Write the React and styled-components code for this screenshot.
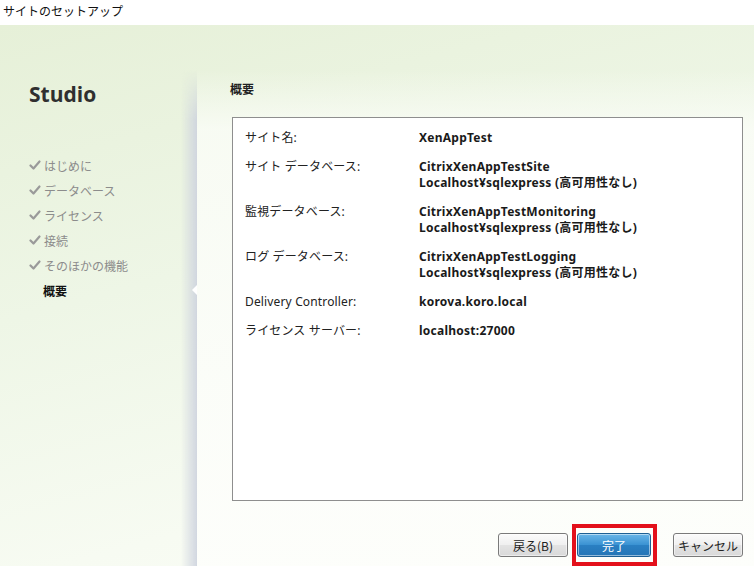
import styled, { createGlobalStyle } from "styled-components";

const Global = createGlobalStyle`
  html, body {
    margin: 0;
    padding: 0;
    width: 754px;
    height: 566px;
    overflow: hidden;
    font-family: "Noto Sans", "Noto Sans CJK JP", sans-serif;
    font-size: 12px;
    color: #1e1e1e;
  }
`;

const Window = styled.div`
  display: flex;
  flex-direction: column;
  width: 754px;
  height: 566px;
  background: #fff;
`;

const TitleBar = styled.div`
  height: 25px;
  padding-left: 3px;
  display: flex;
  align-items: flex-start;
  padding-top: 2px;
  box-sizing: border-box;
  font-family: "Noto Sans CJK JP", sans-serif;
  font-size: 12px;
  color: #111;
  background: #fff;
`;

const Body = styled.div`
  flex: 1;
  display: flex;
  background: linear-gradient(165deg, #e6f0d8 0%, #eef6e6 40%, #f7fbf2 75%, #fbfdf8 100%);
`;

const Sidebar = styled.div`
  width: 197px;
  flex-shrink: 0;
  padding: 55px 0 0 29px;
  box-sizing: border-box;
`;

const Brand = styled.h1`
  margin: 0 0 48px;
  font-family: "Open Sans", "Noto Sans", sans-serif;
  font-weight: 700;
  font-size: 21px;
  line-height: 28px;
  color: #2f2f2f;
`;

const Steps = styled.ul`
  list-style: none;
  margin: 0;
  padding: 0;
  display: flex;
  flex-direction: column;
  gap: 7px;
`;

const Step = styled.li`
  display: flex;
  align-items: center;
  gap: 3px;
  height: 18px;
  font-family: "Noto Sans CJK JP", sans-serif;
  font-size: 12px;
  color: ${(p) => (p.$current ? "#111" : "#8c8c8c")};
  font-weight: ${(p) => (p.$current ? 700 : 400)};
  padding-left: ${(p) => (p.$current ? "14px" : "0")};
`;

const Main = styled.div`
  position: relative;
  flex: 1;
  margin-top: 45px;
  display: flex;
  flex-direction: column;
  padding: 0 11px 0 35px;
  background: linear-gradient(
    180deg,
    rgba(250, 252, 246, 0) 0%,
    rgba(251, 253, 248, 0.8) 12%,
    rgba(253, 254, 251, 0.95) 100%
  );

  &::before {
    content: "";
    position: absolute;
    left: -16px;
    top: 0;
    bottom: 0;
    width: 16px;
    background: linear-gradient(90deg, rgba(205, 210, 222, 0) 0%, rgba(205, 210, 222, 0.9) 100%);
    -webkit-mask-image: linear-gradient(180deg, transparent 0px, #000 50px);
    mask-image: linear-gradient(180deg, transparent 0px, #000 50px);
  }
`;

const Notch = styled.div`
  position: absolute;
  left: -5px;
  top: 215px;
  width: 0;
  height: 0;
  border-top: 5px solid transparent;
  border-bottom: 5px solid transparent;
  border-right: 5px solid #fff;
`;

const Heading = styled.h2`
  margin: 0 0 0 -2px;
  height: 38px;
  line-height: 38px;
  font-family: "Noto Sans CJK JP", sans-serif;
  font-size: 12px;
  font-weight: 700;
  color: #222;
`;

const SummaryBox = styled.div`
  margin-top: 9px;
  height: 384px;
  box-sizing: border-box;
  border: 1px solid #8e8e8e;
  background: #fff;
  padding: 12px 12px;
  display: flex;
  flex-direction: column;
  gap: 13px;
`;

const Row = styled.div`
  display: grid;
  grid-template-columns: 174px 1fr;
  line-height: 16px;
`;

const Label = styled.div`
  font-family: "Noto Sans", "Noto Sans CJK JP", sans-serif;
  letter-spacing: 0.15px;
  color: #222;
`;

const Value = styled.div`
  font-family: "Noto Sans", "Noto Sans CJK JP", sans-serif;
  font-weight: 700;
  letter-spacing: 0.25px;
  color: #1a1a1a;
  white-space: nowrap;
`;

const Footer = styled.div`
  display: flex;
  justify-content: flex-end;
  align-items: center;
  margin-top: 32px;
`;

const Button = styled.button`
  position: relative;
  width: ${(p) => p.$w}px;
  height: 24px;
  margin-left: ${(p) => p.$gap}px;
  border-radius: 3px;
  font-family: "Noto Sans CJK JP", "Noto Sans", sans-serif;
  font-size: 12px;
  padding: 0;
  cursor: pointer;
  border: 1px solid ${(p) => (p.$primary ? "#1d5f93" : "#7a7a7a")};
  color: ${(p) => (p.$primary ? "#fff" : "#222")};
  background: ${(p) =>
    p.$primary
      ? "linear-gradient(180deg, #6ab6e8 0%, #3b93d3 48%, #2a7fc2 52%, #2475b6 100%)"
      : "linear-gradient(180deg, #fbfbfb 0%, #f0f0f0 48%, #e3e3e3 52%, #d9d9d9 100%)"};
  box-shadow: inset 0 0 0 1px rgba(255, 255, 255, 0.5);
`;

const Highlight = styled.span`
  position: absolute;
  left: -6px;
  right: -7px;
  top: -10px;
  bottom: -10px;
  border: 4px solid #e3101b;
  pointer-events: none;
`;

function Check() {
  return (
    <svg width="12" height="12" viewBox="0 0 12 12">
      <path
        d="M1.5 6.5 L4.5 9.5 L10.5 2.5"
        fill="none"
        stroke="#9a9a9a"
        strokeWidth="2.2"
        strokeLinecap="round"
        strokeLinejoin="round"
      />
    </svg>
  );
}

const steps = ["はじめに", "データベース", "ライセンス", "接続", "そのほかの機能"];

const rows = [
  ["サイト名:", ["XenAppTest"]],
  ["サイト データベース:", ["CitrixXenAppTestSite", "Localhost¥sqlexpress (高可用性なし)"]],
  ["監視データベース:", ["CitrixXenAppTestMonitoring", "Localhost¥sqlexpress (高可用性なし)"]],
  ["ログ データベース:", ["CitrixXenAppTestLogging", "Localhost¥sqlexpress (高可用性なし)"]],
  ["Delivery Controller:", ["korova.koro.local"]],
  ["ライセンス サーバー:", ["localhost:27000"]],
];

export default function App() {
  return (
    <Window>
      <Global />
      <TitleBar>サイトのセットアップ</TitleBar>
      <Body>
        <Sidebar>
          <Brand>Studio</Brand>
          <Steps>
            {steps.map((s) => (
              <Step key={s}>
                <Check />
                {s}
              </Step>
            ))}
            <Step $current>概要</Step>
          </Steps>
        </Sidebar>
        <Main>
          <Notch />
          <Heading>概要</Heading>
          <SummaryBox>
            {rows.map(([label, values]) => (
              <Row key={label}>
                <Label>{label}</Label>
                <Value>
                  {values.map((v) => (
                    <div key={v}>{v}</div>
                  ))}
                </Value>
              </Row>
            ))}
          </SummaryBox>
          <Footer>
            <Button $w={70} $gap={0}>戻る(B)</Button>
            <Button $w={74} $gap={9} $primary>
              完了
              <Highlight />
            </Button>
            <Button $w={70} $gap={22}>キャンセル</Button>
          </Footer>
        </Main>
      </Body>
    </Window>
  );
}
